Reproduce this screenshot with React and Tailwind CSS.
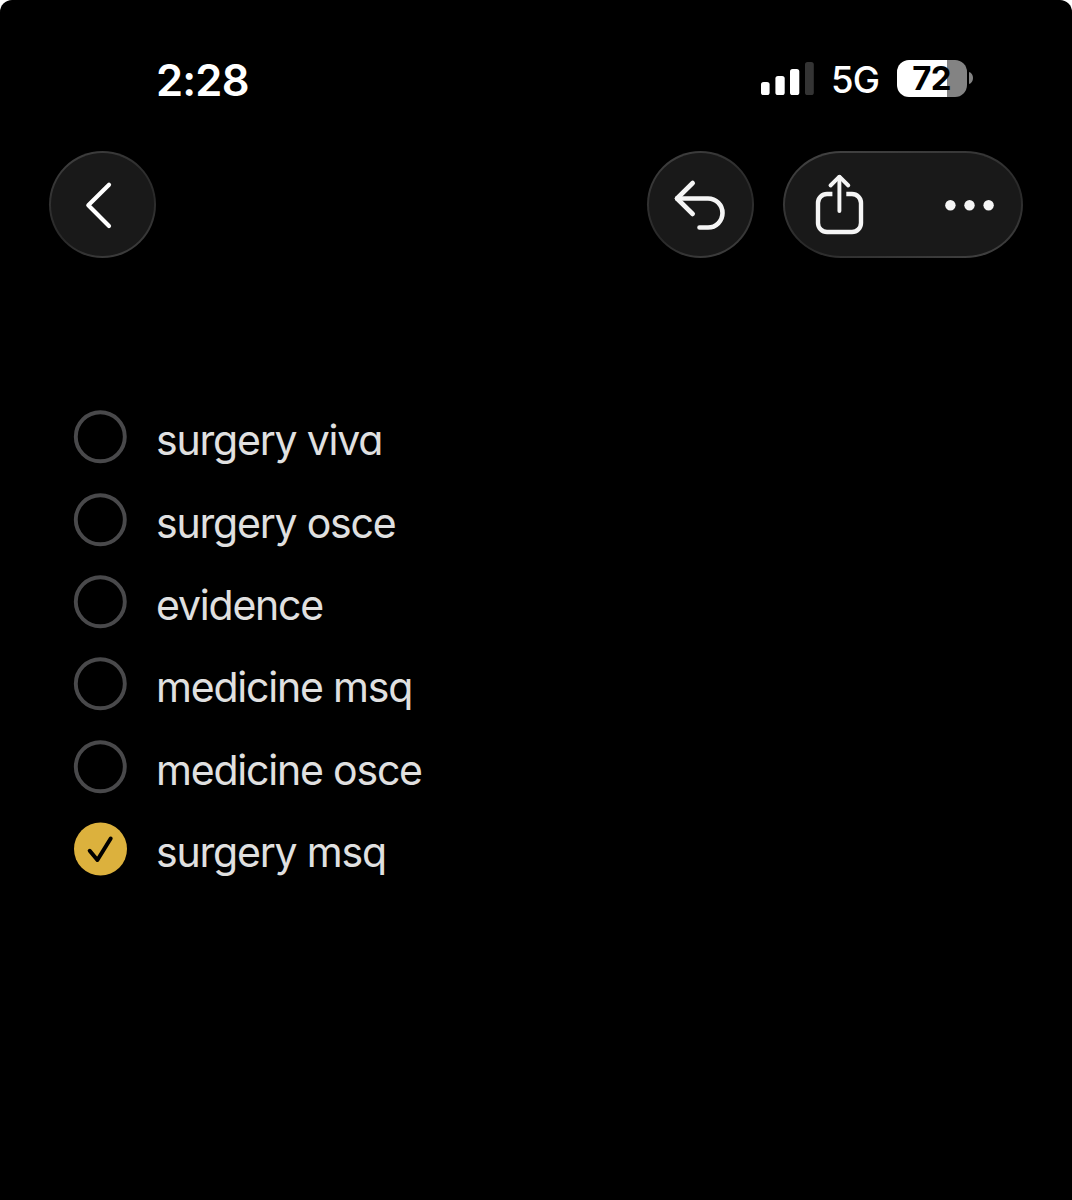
import React from 'react';

const items = [
  { label: 'surgery viva', done: false },
  { label: 'surgery osce', done: false },
  { label: 'evidence', done: false },
  { label: 'medicine msq', done: false },
  { label: 'medicine osce', done: false },
  { label: 'surgery msq', done: true },
];

function StatusBar() {
  return (
    <div className="flex h-[38px] items-center justify-between pl-[156px] pr-[99px] text-white">
      <span className="pt-[3px] text-[43.5px] leading-[38px] font-semibold tracking-[-0.8px]">2:28</span>
      <div className="flex h-[38px] items-center">
        <svg className="mr-[17px] h-[38px] w-[54px]" viewBox="0 0 54 38" fill="currentColor">
          <rect x="1" y="23" width="8.6" height="13" rx="2.6" />
          <rect x="15.4" y="17" width="9.3" height="19" rx="2.6" />
          <rect x="30" y="10" width="9.3" height="26" rx="2.6" />
          <rect x="45" y="3" width="8.8" height="33" rx="2.6" fill="#343434" />
        </svg>
        <span className="w-[66px] pt-[4px] text-[36.5px] leading-[44px] font-[450] tracking-[-0.8px]">5G</span>
        <div className="flex h-[37px] w-[70px] items-center justify-center rounded-[12px] bg-[linear-gradient(to_right,#fff_0_50px,#838383_50px)]">
          <span className="pr-[1px] text-[33px] leading-[37px] font-bold tracking-[-0.8px] text-black">72</span>
        </div>
        <svg className="ml-[2px] h-[12px] w-[4px]" viewBox="0 0 4 12" fill="#838383">
          <path d="M0 0c2.6.8 4 3 4 6s-1.400 5.200-4 6z" />
        </svg>
      </div>
    </div>
  );
}

function Toolbar() {
  return (
    <div className="mt-[54px] flex h-[107px] items-center pl-[49px] pr-[49px] text-[#f5f5f5]">
      <button className="size-[107px] rounded-full bg-[linear-gradient(155deg,#444,#303030_35%,#292929_60%,#444)] p-[2px]">
        <span className="block size-full rounded-full bg-[#191919]">
          <svg className="size-[103px]" viewBox="51 153 103 103" fill="none" stroke="#fff" strokeWidth="4.2" strokeLinecap="round" strokeLinejoin="round">
            <path d="M109 184.700 88.300 205.300 109 225.900" />
          </svg>
        </span>
      </button>
      <button className="ml-auto size-[107px] rounded-full bg-[linear-gradient(155deg,#444,#303030_35%,#292929_60%,#444)] p-[2px]">
        <span className="block size-full rounded-full bg-[#191919]">
          <svg className="size-[103px]" viewBox="649 153 103 103" fill="none" stroke="currentColor" strokeWidth="4.6" strokeLinecap="round" strokeLinejoin="round">
            <path d="M692.700 183 677 198.500 692.700 214" />
            <path d="M677 198.500H708a14.500 14.500 0 0 1 0 29H699.500" />
          </svg>
        </span>
      </button>
      <div className="ml-[29px] h-[107px] w-[240px] rounded-[58px/53.5px] bg-[linear-gradient(165deg,#444,#333_40%,#292929_60%,#444)] p-[2px]">
        <div className="flex h-full items-center rounded-[56px/51.5px] bg-[#191919]">
          <button>
            <svg className="h-[103px] w-[118px]" viewBox="785 153 118 103" fill="none" stroke="currentColor" strokeWidth="4.400" strokeLinecap="round" strokeLinejoin="round">
              <path d="M832.400 194H827a9 9 0 0 0-9 9V223a9 9 0 0 0 9 9H852a9 9 0 0 0 9-9V203a9 9 0 0 0-9-9H846.300" strokeLinecap="butt" />
              <path d="M839.400 211V177" strokeWidth="3.900" />
              <path d="M830.500 185.500 839.400 176.700 848.300 185.500" strokeWidth="3.900" />
            </svg>
          </button>
          <button>
            <svg className="h-[103px] w-[118px]" viewBox="903 153 118 103" fill="currentColor">
              <circle cx="950.400" cy="205.200" r="5.200" />
              <circle cx="969.500" cy="205.200" r="5.200" />
              <circle cx="988.600" cy="205.200" r="5.200" />
            </svg>
          </button>
        </div>
      </div>
    </div>
  );
}

function CheckItem({ label, done }) {
  return (
    <li className="flex h-[82.35px] items-center">
      {done ? (
        <svg className="size-[54px]" viewBox="0 0 54 54" fill="none">
          <circle cx="27.500" cy="27" r="26.5" fill="#dcb13d" />
          <path d="m16.700 28.800 7.700 9.200 13.300-21.500" stroke="#000" strokeWidth="4" strokeLinecap="round" strokeLinejoin="round" />
        </svg>
      ) : (
        <svg className="size-[54px]" viewBox="0 0 54 54" fill="none">
          <circle cx="27.300" cy="26.800" r="24.500" stroke="#49494b" strokeWidth="3.900" />
        </svg>
      )}
      <span className="ml-[29px] pt-[6px] text-[41px] leading-[50px] tracking-[-1.2px] text-[#e0e0e0]">{label}</span>
    </li>
  );
}

export default function App() {
  return (
    <div className="h-[1200px] w-[1072px] overflow-hidden bg-white">
      <div className="h-full rounded-t-[12px] bg-black pt-[59px] font-['Inter',sans-serif] [font-feature-settings:'cv11']">
        <StatusBar />
        <Toolbar />
        <ul className="mt-[138px] pl-[73px]">
          {items.map((item) => (
            <CheckItem key={item.label} {...item} />
          ))}
        </ul>
      </div>
    </div>
  );
}
